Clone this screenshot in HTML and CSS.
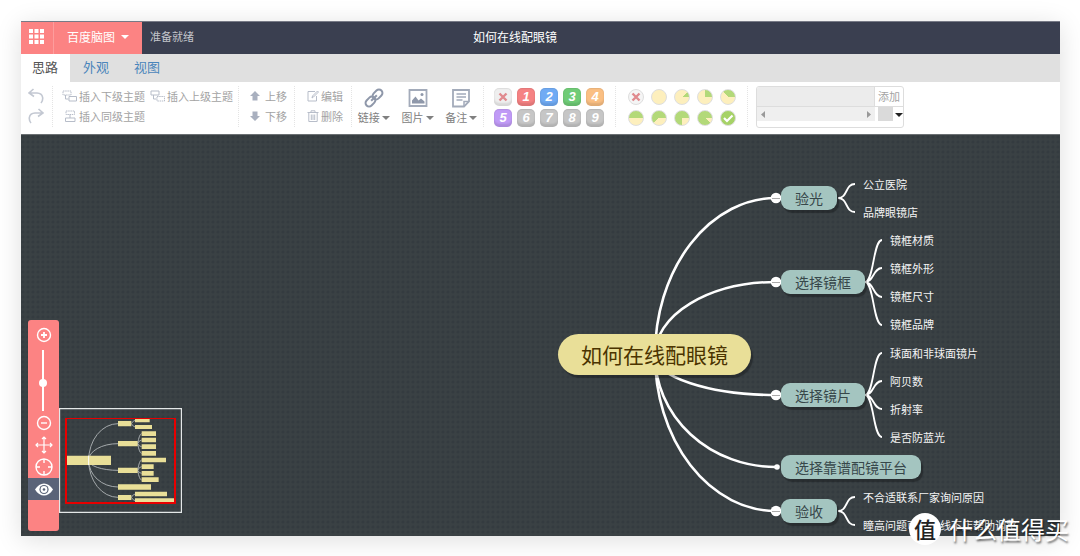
FILE: index.html
```html
<!DOCTYPE html>
<html lang="zh-CN">
<head>
<meta charset="utf-8">
<title>如何在线配眼镜</title>
<link rel="stylesheet" href="styles.css">
</head>
<body>
<svg width="0" height="0" class="defs" aria-hidden="true">
  <symbol id="caret" viewBox="0 0 8 4"><path d="M0 0h8L4 4z" fill="currentColor"/></symbol>
  <symbol id="cross" viewBox="0 0 18 18"><path d="M5.500 5.500l7 7M12.500 5.500l-7 7" stroke="#e08a8e" stroke-width="2.400" fill="none"/></symbol>
</svg>
<div class="app">
  <header class="header">
    <button class="apps" aria-label="应用"><svg width="15" height="15" viewBox="0 0 15 15" fill="#fff"><path d="M0 0h4v4H0zM5.500 0h4v4h-4zM11 0h4v4h-4zM0 5.500h4v4H0zM5.500 5.500h4v4h-4zM11 5.500h4v4h-4zM0 11h4v4H0zM5.500 11h4v4h-4zM11 11h4v4h-4z"/></svg></button>
    <button class="brand">百度脑图<svg width="8" height="4"><use href="#caret"/></svg></button>
    <span class="status">准备就绪</span>
    <h1 class="title">如何在线配眼镜</h1>
  </header>
  <nav class="tabs">
    <a href="#idea" class="tab tab-active">思路</a>
    <a href="#look" class="tab">外观</a>
    <a href="#view" class="tab">视图</a>
  </nav>
  <div class="toolbar">
    <div class="group history">
      <button aria-label="撤销"><svg width="16" height="16" viewBox="0 0 16 16" class="line"><path d="M5.500 1L1 5l5 3.500M1.500 5H9c7 .5 6.500 7 4 10"/></svg></button>
      <button aria-label="重做"><svg width="16" height="16" viewBox="0 0 16 16" class="line"><path d="M10.500 1L15 5l-5 3.500M14.500 5H7C0 5.500.5 12 3 15"/></svg></button>
    </div>
    <div class="group insert">
      <button class="tool"><svg width="16" height="12" viewBox="0 0 16 12" class="line"><path d="M1 1h8v4H1z" stroke-dasharray="1.500 .7"/><path d="M3.500 5v4h3M7 6.500h7.500V11H7z"/></svg>插入下级主题</button>
      <button class="tool"><svg width="16" height="12" viewBox="0 0 16 12" class="line"><path d="M1 1h8v4H1zM3.500 5v4h3"/><path d="M7 6.500h7.500V11H7z" stroke-dasharray="1.500 .7"/></svg>插入上级主题</button>
      <button class="tool"><svg width="16" height="12" viewBox="0 0 16 12" class="line"><path d="M4 1h8.500v3.500H4z" stroke-dasharray="1.500 .7"/><path d="M8 4.500V8M3.500 8h9.500v3.500H3.500z"/></svg>插入同级主题</button>
    </div>
    <div class="group move">
      <button class="tool"><svg width="10" height="10" viewBox="0 0 10 10" class="solid"><path d="M5 0l5 5H7.500v4.500h-5V5H0z"/></svg>上移</button>
      <button class="tool"><svg width="10" height="10" viewBox="0 0 10 10" class="solid"><path d="M5 10L0 5h2.500V.5h5V5H10z"/></svg>下移</button>
    </div>
    <div class="group edit">
      <button class="tool"><svg width="12" height="12" viewBox="0 0 12 12" class="line"><path d="M8 1.500H1v9.500h8.500V6M5 8l.5-2L10.500 1l1 1-5 5z"/></svg>编辑</button>
      <button class="tool"><svg width="12" height="12" viewBox="0 0 12 12" class="line"><path d="M.5 2.500h11M4 2.500V.8h4v1.700M1.800 3v8.500h8.400V3M4.300 4.500V10M6 4.500V10M7.700 4.500V10"/></svg>删除</button>
    </div>
    <div class="group media">
      <button class="big"><svg width="20" height="20" viewBox="0 0 20 20" class="heavy"><g transform="rotate(-45 10 10)"><rect x="-0.500" y="6.500" width="11" height="7" rx="3.500"/><rect x="9.500" y="6.500" width="11" height="7" rx="3.500"/><path d="M6 10h8"/></g></svg><span>链接<svg width="8" height="4"><use href="#caret"/></svg></span></button>
      <button class="big"><svg width="20" height="20" viewBox="0 0 20 20"><path d="M1.500 2h17v16h-17z" fill="none" stroke="#a3abba" stroke-width="1.800"/><path d="M4 15.500v-3l3.500-4 3 4 2.500-2 3.500 3v2z" fill="#8f98aa"/><circle cx="14" cy="6.500" r="1.500" fill="#8f98aa"/></svg><span>图片<svg width="8" height="4"><use href="#caret"/></svg></span></button>
      <button class="big"><svg width="20" height="20" viewBox="0 0 20 20" fill="none" stroke="#a3abba" stroke-width="1.800"><path d="M2 2h16v11.500l-5 5H2z"/><path d="M5.500 6h9.500M5.500 9h9.500M5.500 12h6M13 18v-4.500h4.500" stroke-width="1.500"/></svg><span>备注<svg width="8" height="4"><use href="#caret"/></svg></span></button>
    </div>
    <div class="group marks">
      <button class="prio" aria-label="移除优先级"><svg width="18" height="18"><use href="#cross"/></svg></button>
      <button class="prio red">1</button>
      <button class="prio blue">2</button>
      <button class="prio green">3</button>
      <button class="prio orange">4</button>
      <button class="prio purple">5</button>
      <button class="prio gray">6</button>
      <button class="prio gray">7</button>
      <button class="prio gray">8</button>
      <button class="prio gray">9</button>
    </div>
    <div class="group marks progress">
      <button class="prog none" aria-label="移除进度"><svg width="18" height="18"><use href="#cross"/></svg></button>
      <button class="prog" aria-label="未开始"></button>
      <button class="prog p1" aria-label="完成 1/8"></button>
      <button class="prog p2" aria-label="完成 1/4"></button>
      <button class="prog p3" aria-label="完成 3/8"></button>
      <button class="prog p4" aria-label="完成一半"></button>
      <button class="prog p5" aria-label="完成 5/8"></button>
      <button class="prog p6" aria-label="完成 3/4"></button>
      <button class="prog p7" aria-label="完成 7/8"></button>
      <button class="prog p8" aria-label="已完成"><svg width="14" height="14" viewBox="0 0 14 14" fill="none" stroke="#fff" stroke-width="2.200"><path d="M3 7l3 3 5.500-5.500"/></svg></button>
    </div>
    <div class="resource">
      <div class="resource-row">
        <input type="text" aria-label="标签">
        <button class="add">添加</button>
      </div>
      <div class="resource-row">
        <div class="scroll"><svg width="4" height="7" viewBox="0 0 4 7"><path d="M4 0v7L0 3.500z" fill="#999"/></svg><svg width="4" height="7" viewBox="0 0 4 7"><path d="M0 0v7l4-3.500z" fill="#999"/></svg></div>
        <span class="corner"></span>
        <button class="more" aria-label="更多"><svg width="8" height="4"><use href="#caret"/></svg></button>
      </div>
    </div>
  </div>

  <main class="canvas">
    <svg class="links" viewBox="21 134 1039 402" width="1039" height="402" fill="none" stroke="#fff">
      <g stroke-width="2.600">
        <path d="M655 355A121 157 0 0 1 776 198"/>
        <path d="M655 355A121 73 0 0 1 776 282"/>
        <path d="M655 355A121 40 0 0 0 776 395"/>
        <path d="M655 355A121 112 0 0 0 776 467"/>
        <path d="M655 355A121 156 0 0 0 776 511"/>
      </g>
      <g stroke-width="1.800">
        <path d="M838 198C848 198 845 184 855 184M838 198C848 198 845 212 855 212"/>
        <path d="M865 282C874 282 873 240 882 240M865 282C874 282 873 268 882 268M865 282C874 282 873 297 882 297M865 282C874 282 873 325 882 325"/>
        <path d="M865 395C874 395 873 353 882 353M865 395C874 395 873 381 882 381M865 395C874 395 873 409 882 409M865 395C874 395 873 437 882 437"/>
        <path d="M838 511C848 511 845 497 855 497M838 511C848 511 845 525 855 525"/>
      </g>
      <g fill="#fff" stroke="none">
        <circle cx="776" cy="198" r="5.300"/><circle cx="776" cy="282" r="5.300"/><circle cx="776" cy="395" r="5.300"/><circle cx="777" cy="467" r="2.800"/><circle cx="776" cy="511" r="5.300"/>
      </g>
      <path d="M772 198.500h8M772 282.500h8M772 395.500h8M772 511.500h8" stroke="#aaa"/>
    </svg>
    <div class="node root">如何在线配眼镜</div>
    <div class="node topic exam">验光</div>
    <div class="node topic frame">选择镜框</div>
    <div class="node topic lens">选择镜片</div>
    <div class="node topic shop">选择靠谱配镜平台</div>
    <div class="node topic check">验收</div>
    <ul class="leaves exam-items"><li>公立医院</li><li>品牌眼镜店</li></ul>
    <ul class="leaves frame-items"><li>镜框材质</li><li>镜框外形</li><li>镜框尺寸</li><li>镜框品牌</li></ul>
    <ul class="leaves lens-items"><li>球面和非球面镜片</li><li>阿贝数</li><li>折射率</li><li>是否防蓝光</li></ul>
    <ul class="leaves check-items"><li>不合适联系厂家询问原因</li><li>瞳高问题可以去线下店帮助调整</li></ul>

    <div class="navigator">
      <button aria-label="放大"><svg width="16" height="16" viewBox="0 0 16 16" class="nav-icon"><circle cx="8" cy="8" r="6.500"/><path d="M5 8h6M8 5v6" stroke-width="1.800"/></svg></button>
      <input class="zoom" type="range" min="0" max="100" value="54" aria-label="缩放">
      <button aria-label="缩小"><svg width="16" height="16" viewBox="0 0 16 16" class="nav-icon"><circle cx="8" cy="8" r="6.500"/><path d="M5 8h6"/></svg></button>
      <button aria-label="拖动"><svg width="18" height="18" viewBox="0 0 18 18" class="nav-icon thin"><path d="M1 9h16M9 1v16M3 7L1 9l2 2M15 7l2 2-2 2M7 3l2-2 2 2M7 15l2 2 2-2"/></svg></button>
      <button aria-label="居中"><svg width="18" height="18" viewBox="0 0 18 18" class="nav-icon"><circle cx="9" cy="9" r="8"/><path d="M1 9h4M13 9h4M9 1v4M9 13v4"/></svg></button>
      <button class="on" aria-label="缩略图"><svg width="18" height="13" viewBox="0 0 18 13"><path d="M0 6.500C5-1.500 13-1.500 18 6.500 13 14.500 5 14.500 0 6.500z" fill="#fff"/><circle cx="9" cy="6.500" r="4.600" fill="#5a6378"/><circle cx="9" cy="6.500" r="3.400" fill="#fff"/><circle cx="9" cy="6.500" r="1.300" fill="#5a6378"/></svg></button>
    </div>
    <svg class="minimap" viewBox="147 295 369 315" width="123" height="105">
      <path d="M148.500 296.500h366v312h-366z" fill="none" stroke="#e4e8e8" stroke-width="4"/>
      <g fill="none" stroke="#a4a9ab" stroke-width="3">
        <path d="M236 452A88 110 0 0 1 324 342M236 452A88 50 0 0 1 324 402M236 452A88 30 0 0 0 324 482M236 452A88 80 0 0 0 324 532M236 452A88 111 0 0 0 324 563"/>
        <path d="M364 342Q370 332 376 332M364 342Q370 352 376 352M383 402Q388 372 395 372M383 402Q388 391 395 391M383 402Q388 411 395 411M383 402Q388 431 395 431M383 482Q388 451 395 451M383 482Q388 471 395 471M383 482Q388 491 395 491M383 482Q388 511 395 511M364 563Q370 553 376 553M364 563Q370 573 376 573"/>
      </g>
      <path fill="#e9df98" d="M168 438h135v28H168zM324 334h40v16h-40zM324 394h59v16h-59zM324 474h59v16h-59zM324 524h99v16h-99zM324 556h40v15h-40zM375 326h44v12h-44zM375 346h51v12h-51zM395 365h43v14h-43zM395 384h43v14h-43zM395 404h43v14h-43zM395 424h43v14h-43zM395 444h73v14h-73zM395 464h36v14h-36zM395 484h36v14h-36zM395 503h51v14h-51zM375 546h96v14h-96zM375 566h117v13H375z"/>
      <path d="M236 438v28" stroke="#fff" stroke-width="3"/>
      <path d="M167.500 325.500h327v254h-327z" fill="none" stroke="#e80000" stroke-width="4" shape-rendering="crispEdges"/>
    </svg>
  </main>
</div>
<div class="watermark"><span class="seal">值</span>什么值得买</div>
</body>
</html>
```
FILE: styles.css
```css
* { box-sizing: border-box; }
body {
  margin: 0;
  padding: 21px 20px 20px 21px;
  background: #fff;
  font: 11px/16px "Noto Sans CJK SC", sans-serif;
  min-height: 100vh;
  display: flex;
  position: relative;
}
button, input { font: inherit; margin: 0; padding: 0; border: 0; background: none; color: inherit; }
button { display: flex; align-items: center; justify-content: center; white-space: nowrap; }
svg { flex: none; }
.defs { position: absolute; }
.app { flex: 1; display: flex; flex-direction: column; box-shadow: 0 4px 24px rgba(0, 0, 0, .13); }

.header { display: flex; height: 33px; background: #3a3f50; color: #fff; border-top: 1px solid #777a86; line-height: 29px; }
.apps { width: 33px; height: 32px; background: #fc8383; border-right: 1px solid #fd9d9d; padding: 0 2px 4px 0; }
.brand { width: 88px; height: 32px; background: #fc8383; font-size: 12px; gap: 6px; padding-bottom: 3px; }
.status { flex: 0 0 331px; padding-left: 8px; color: #c3c5cb; }
.title { margin: 0; font-size: 12px; font-weight: 400; }

.tabs { display: flex; height: 28px; background: #e0e0e0; font-size: 13px; line-height: 26px; }
.tab { padding: 0 12px 0 13px; color: #4a85bb; text-decoration: none; }
.tab-active { background: #fff; color: #555; padding-left: 11px; }

.toolbar { display: flex; height: 52px; padding: 4px 0 7px; background: #fff; color: #a3a3a3; }
.group { border-right: 1px dotted #e4e4e4; }
.line { fill: none; stroke: #b7bdc9; stroke-width: 1; }
.solid { fill: #a9b0bf; }
.heavy { fill: none; stroke: #8f98aa; stroke-width: 2; }
.tool { height: 20px; justify-content: flex-start; }
.history { width: 32px; padding-left: 7px; }
.history button { height: 20px; }
.history .line { stroke-width: 1.6; stroke: #c3c8d2; }
.insert { width: 186px; display: grid; grid-template-columns: 88px 88px; grid-auto-rows: 20px; padding-left: 9px; }
.insert .tool { gap: 1px; }
.move { width: 56px; padding-left: 11px; }
.move .tool { gap: 5px; }
.edit { width: 57px; padding-left: 12px; }
.edit .tool { gap: 2px; }
.media { width: 132px; display: flex; padding-top: 2px; }
.big { width: 44px; flex-direction: column; color: #808080; }
.big span { display: flex; align-items: center; gap: 2px; line-height: 19px; }
.marks { width: 132px; padding-left: 10px; display: grid; grid-template-columns: repeat(5, 23px); grid-auto-rows: 21px; align-items: center; }
.progress { padding-left: 12px; }
.prio {
  width: 18px; height: 18px; border-radius: 5px; color: #fff; background: #efefef;
  font: italic 700 13px/18px "Liberation Sans", sans-serif;
  box-shadow: inset 0 -3px 2px rgba(0, 0, 0, .1), inset 0 1px 1px rgba(0, 0, 0, .08);
}
.red { background: #f58283; }
.blue { background: #70abf4; }
.green { background: #70cc77; }
.orange { background: #fabf83; }
.purple { background: #c09af6; }
.gray { background: #c6c6c6; }
.prog { width: 16px; height: 16px; border-radius: 50%; border: 1px solid #dedede; background: #fdefbd; }
.none { background: #f5f5f5; }
.p1 { background: conic-gradient(from 45deg, #b3d979 45deg, #fdefbd 0); }
.p2 { background: conic-gradient(#b3d979 90deg, #fdefbd 0); }
.p3 { background: conic-gradient(from -45deg, #b3d979 135deg, #fdefbd 0); }
.p4 { background: conic-gradient(from -90deg, #b3d979 180deg, #fdefbd 0); }
.p5 { background: conic-gradient(from -135deg, #b3d979 225deg, #fdefbd 0); }
.p6 { background: conic-gradient(from 180deg, #b3d979 270deg, #fdefbd 0); }
.p7 { background: conic-gradient(from 135deg, #b3d979 315deg, #fdefbd 0); }
.p8 { background: #a6d267; }

.resource { width: 148px; height: 42px; margin-left: 8px; border: 1px solid #ddd; border-radius: 3px; overflow: hidden; }
.resource-row { display: flex; }
.resource-row input { width: 118px; height: 20px; background: #ececec; border: 1px solid #ddd; border-width: 0 1px 1px 0; }
.add { flex: 1; height: 20px; padding-bottom: 2px; border-bottom: 1px solid #ddd; }
.scroll { width: 118px; height: 14px; padding: 0 4px; background: #efefef; display: flex; align-items: center; justify-content: space-between; }
.corner { width: 15px; height: 14px; margin-left: 3px; background: #dadada; }
.more { flex: 1; color: #222; padding: 2px 0 0 2px; }

.canvas {
  position: relative; flex: 1; min-height: 401px; overflow: hidden; border-top: 1px solid #6b7073;
  background: radial-gradient(circle at 2px 2px, #343b40 1px, transparent 2px) 0 0 / 5px 5px #3a4144;
}
.links { position: absolute; left: 0; top: -1px; }
.node { position: absolute; white-space: nowrap; box-shadow: 2px 3px 1px rgba(0, 0, 0, .28); }
.root { left: 537px; top: 199px; padding: 0 23px; border-radius: 21px; background: #e9df98; color: #4b3400; font-size: 21px; line-height: 41px; }
.topic { left: 760px; padding: 0 14px; border-radius: 9px; background: #a4c5c0; color: #37474a; font-size: 14px; line-height: 24px; }
.exam { top: 51px; }
.frame { top: 135px; }
.lens { top: 248px; }
.shop { top: 320px; }
.check { top: 364px; }
.leaves { position: absolute; margin: 0; padding: 0; list-style: none; color: #f4f4f4; line-height: 28px; white-space: nowrap; }
.exam-items { left: 842px; top: 35px; }
.frame-items { left: 869px; top: 91px; }
.lens-items { left: 869px; top: 204px; }
.check-items { left: 842px; top: 348px; }

.navigator { position: absolute; left: 7px; bottom: 5px; width: 31px; height: 211px; padding-top: 4px; background: #fc8383; border-radius: 3px; }
.navigator button { width: 31px; height: 22px; }
.navigator .on { background: #5a6378; }
.nav-icon { fill: none; stroke: #fff; stroke-width: 1.4; }
.thin { stroke-width: 1.2; }
.zoom { display: block; appearance: none; writing-mode: vertical-lr; width: 8px; height: 61px; margin: 4px 11px 1px; background: linear-gradient(#fff, #fff) center / 2px 100% no-repeat; }
.zoom::-webkit-slider-thumb { appearance: none; width: 8px; height: 8px; border-radius: 50%; background: #fff; }
.minimap { position: absolute; left: 38px; bottom: 23px; }

.watermark { position: absolute; right: 11px; bottom: 11px; display: flex; align-items: center; gap: 8px; color: #fff; font-size: 24px; line-height: 32px; text-shadow: 1px 2px 2px rgba(0, 0, 0, .55); }
.seal { width: 32px; height: 32px; border-radius: 50%; background: #fff; color: #222; text-align: center; font-size: 22px; line-height: 30px; font-weight: 500; text-shadow: none; }
```
